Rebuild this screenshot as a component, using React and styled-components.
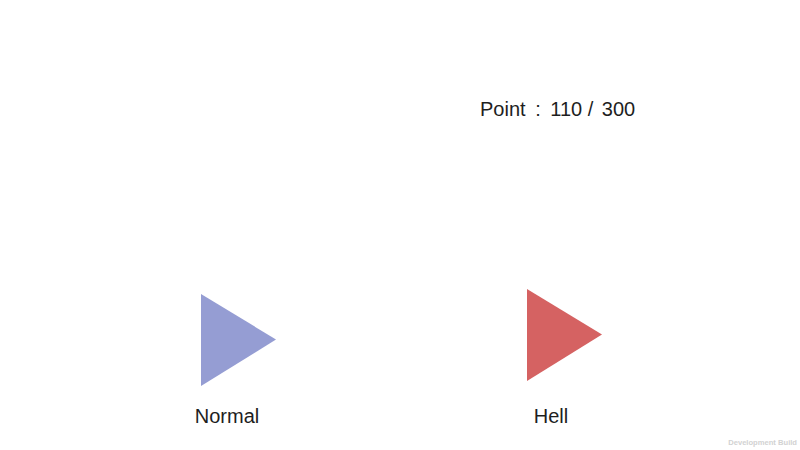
import React from 'react'
import styled, { createGlobalStyle } from 'styled-components'

const GlobalStyle = createGlobalStyle`
  html, body {
    margin: 0;
    padding: 0;
    background: #ffffff;
  }
`

const Screen = styled.div`
  position: relative;
  width: 800px;
  height: 450px;
  overflow: hidden;
  background: #ffffff;
  font-family: "Liberation Sans", Arial, sans-serif;
  color: #1e1e1e;
  display: flex;
  flex-direction: column;
`

const ScoreRow = styled.div`
  padding: 98px 0 0 480px;
  font-size: 20px;
  line-height: 22px;
  white-space: pre;
`

const Colon = styled.span`
  padding: 0 4px;
`

const Slash = styled.span`
  padding-right: 3px;
`

const ModeRow = styled.div`
  display: flex;
  padding-left: 167px;
  gap: 204px;
  margin-top: 169px;
`

const ModeButton = styled.div`
  width: 120px;
  display: flex;
  flex-direction: column;
  margin-top: ${p => p.$drop}px;
  cursor: pointer;
`

const Arrow = styled.svg`
  display: block;
  margin-left: ${p => p.$offset}px;
`

const Label = styled.div`
  margin-top: ${p => p.$gap}px;
  text-align: center;
  font-size: 20px;
  line-height: 20px;
`

const Watermark = styled.div`
  position: absolute;
  right: 3px;
  bottom: 3px;
  font-size: 7.6px;
  font-weight: 600;
  color: #d2d2d2;
`

function Mode({ color, label, offset, drop, gap }) {
  return (
    <ModeButton $drop={drop}>
      <Arrow $offset={offset} width="75" height="92" viewBox="0 0 75 92">
        <polygon points="0,0 75,45.5 0,92" fill={color} />
      </Arrow>
      <Label $gap={gap}>{label}</Label>
    </ModeButton>
  )
}

export default function App() {
  return (
    <>
      <GlobalStyle />
      <Screen>
        <ScoreRow>
          {'Point '}<Colon>:</Colon>{' 110 '}<Slash>/</Slash>{' 300'}
        </ScoreRow>
        <ModeRow>
          <Mode color="#959dd3" label="Normal" offset={34} drop={5} gap={20} />
          <Mode color="#d56262" label="Hell" offset={36} drop={0} gap={25} />
        </ModeRow>
        <Watermark>Development Build</Watermark>
      </Screen>
    </>
  )
}
